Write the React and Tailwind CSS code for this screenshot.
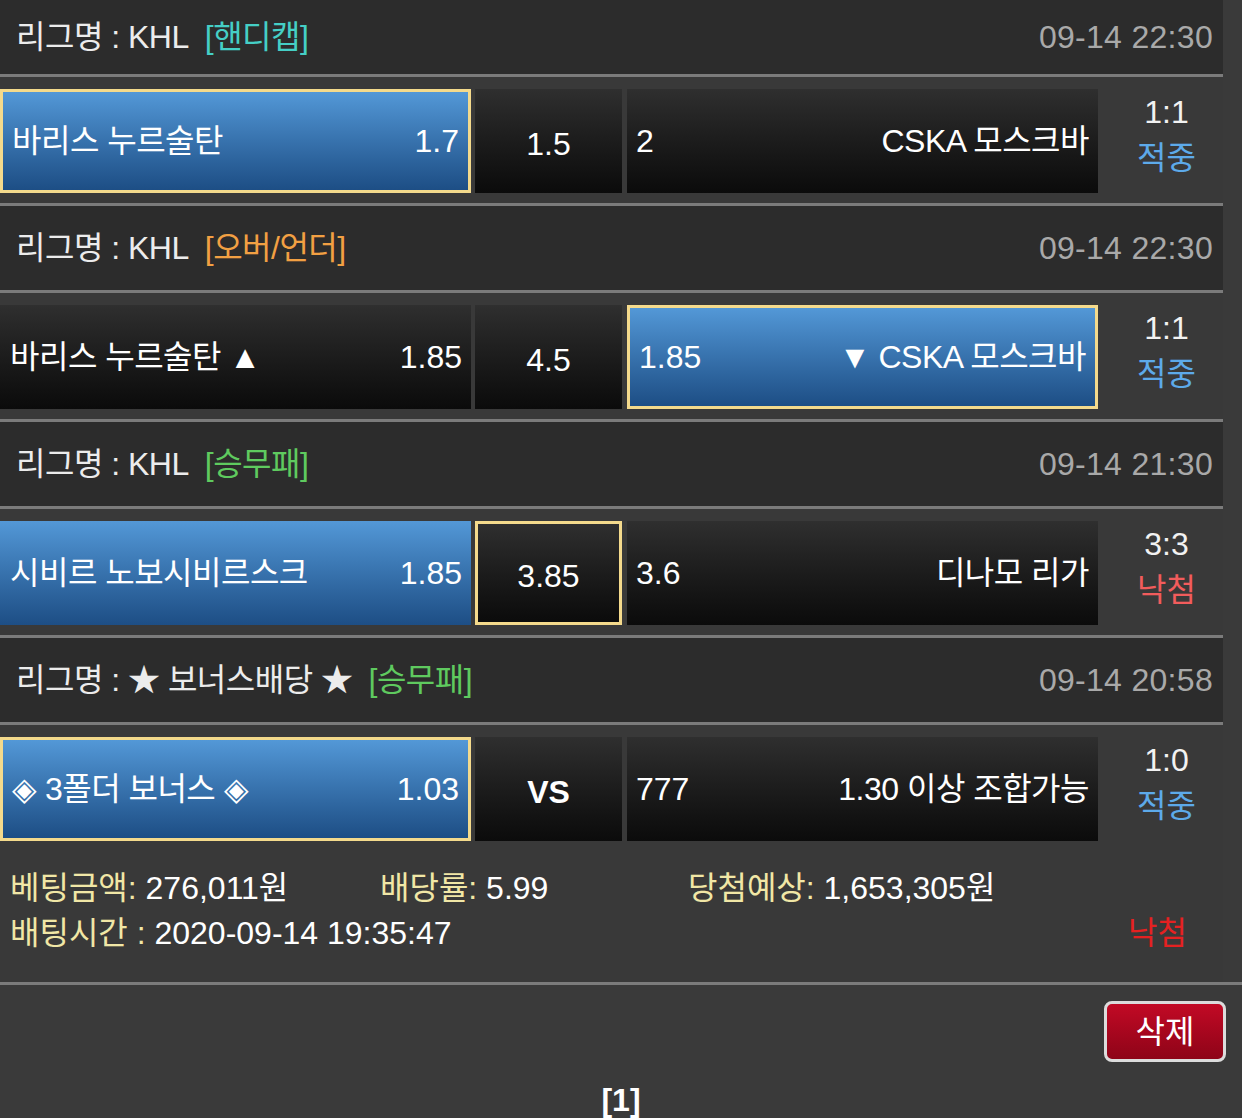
import React from 'react';

const FONT = { fontFamily: '"Liberation Sans", "Noto Sans CJK KR", sans-serif' };

const matches = [
    {
        league: 'KHL', type: '[핸디캡]', typeColor: 'text-[#45cfc6]', date: '09-14 22:30',
        home: '바리스 누르술탄', homeOdd: '1.7', mid: '1.5', awayOdd: '2', away: 'CSKA 모스크바',
        score: '1:1', result: '적중', pick: 'home', win: null,
    },
    {
        league: 'KHL', type: '[오버/언더]', typeColor: 'text-[#f2a043]', date: '09-14 22:30',
        home: '바리스 누르술탄 ▲', homeOdd: '1.85', mid: '4.5', awayOdd: '1.85', away: '▼ CSKA 모스크바',
        score: '1:1', result: '적중', pick: 'away', win: null,
    },
    {
        league: 'KHL', type: '[승무패]', typeColor: 'text-[#5fca5f]', date: '09-14 21:30',
        home: '시비르 노보시비르스크', homeOdd: '1.85', mid: '3.85', awayOdd: '3.6', away: '디나모 리가',
        score: '3:3', result: '낙첨', pick: 'mid', win: 'home',
    },
    {
        league: '★ 보너스배당 ★', type: '[승무패]', typeColor: 'text-[#5fca5f]', date: '09-14 20:58',
        home: '◈ 3폴더 보너스 ◈', homeOdd: '1.03', mid: 'VS', awayOdd: '777', away: '1.30 이상 조합가능',
        score: '1:0', result: '적중', pick: 'home', win: null,
    },
];

const cellBase = 'flex items-center h-full';
const blue = 'bg-linear-to-b from-[#5398d7] to-[#1d4e85]';
const dark = 'bg-linear-to-b from-[#2f2f2f] to-[#0b0b0b]';

function Cell({ selected, blueBg, className, children }) {
    return (
        <div
            className={`${cellBase} ${blueBg ? blue : dark} ${selected ? 'border-[3px] border-[#f4da8c]' : ''} ${className}`}
        >
            {children}
        </div>
    );
}

function MatchBlock({ m, first }) {
    const homeBlue = m.pick === 'home' || m.win === 'home';
    const awayBlue = m.pick === 'away';
    return (
        <div>
            {/* League header */}
            <div className={`flex items-center justify-between bg-[#2c2c2c] w-[1223px] pl-[16px] pr-[10px] ${first ? 'h-[74px]' : 'h-[84px]'}`}>
                <div className="flex items-center text-[#ececec] tracking-[-0.5px]">
                    <span>리그명 : {m.league}</span>
                    <span className={`ml-[16px] ${m.typeColor}`}>{m.type}</span>
                </div>
                <span className="text-[#a9a9a9] tracking-[0.3px]">{m.date}</span>
            </div>
            <div className="h-[3px] w-[1223px] bg-[#7b7b7b]" />

            {/* Match row */}
            <div className="flex w-[1223px] h-[126px] bg-[#393939] pt-[12px] pb-[10px]">
                <Cell selected={m.pick === 'home'} blueBg={homeBlue} className="w-[471px] justify-between pl-[10px] pr-[9px]">
                    <span className={`tracking-[-0.5px] ${m.pick === 'home' ? '-ml-[1px]' : ''}`}>{m.home}</span>
                    <span>{m.homeOdd}</span>
                </Cell>
                <Cell selected={m.pick === 'mid'} blueBg={false} className="w-[147px] ml-[4px] justify-center pt-[6px]">
                    <span className={m.mid === 'VS' ? 'font-bold' : ''}>{m.mid}</span>
                </Cell>
                <Cell selected={m.pick === 'away'} blueBg={awayBlue} className="w-[471px] ml-[5px] justify-between pl-[9px] pr-[9px]">
                    <span>{m.awayOdd}</span>
                    <span className="tracking-[-0.5px]">{m.away}</span>
                </Cell>
                <div className="flex-1 flex flex-col items-center justify-center pl-[12px] -mt-[12px] leading-[46px]">
                    <span className="text-[#f2f2f2]">{m.score}</span>
                    <span className={m.result === '적중' ? 'text-[#5daaea]' : 'text-[#f25c5c]'}>{m.result}</span>
                </div>
            </div>
            {!m.last && <div className="h-[3px] w-[1223px] bg-[#7b7b7b]" />}
        </div>
    );
}

export default function App() {
    return (
        <div className="w-[1242px] h-[1118px] overflow-hidden bg-[#3a3a3a] text-white text-[32px] leading-none" style={FONT}>
            {matches.map((m, i) => (
                <MatchBlock key={i} m={{ ...m, last: i === matches.length - 1 }} first={i === 0} />
            ))}

            {/* Summary */}
            <div className="w-[1223px] h-[131px] pl-[10px] pr-[36px] pt-[14px] bg-[#393939]">
                <div className="flex h-[45px] items-center">
                    <div className="w-[370px]">
                        <span className="text-[#f1e7a6]">베팅금액:</span> <span>276,011원</span>
                    </div>
                    <div className="w-[308px]">
                        <span className="text-[#f1e7a6]">배당률:</span> <span>5.99</span>
                    </div>
                    <div>
                        <span className="text-[#f1e7a6]">당첨예상:</span> <span>1,653,305원</span>
                    </div>
                </div>
                <div className="flex h-[45px] items-center justify-between">
                    <div>
                        <span className="text-[#f1e7a6]">배팅시간 :</span> <span>2020-09-14 19:35:47</span>
                    </div>
                    <span className="text-[#e52121]">낙첨</span>
                </div>
            </div>
            <div className="h-[3px] w-full bg-[#7b7b7b]" />

            {/* Footer */}
            <div className="flex justify-end pr-[16px] pt-[16px]">
                <button className="w-[122px] h-[61px] rounded-[8px] border-[3px] border-[#dcdcdc] bg-linear-to-b from-[#c20a25] to-[#8e0418] text-white text-[32px]">
                    삭제
                </button>
            </div>
            <div className="flex justify-center pt-[22px] font-bold">[1]</div>
        </div>
    );
}
